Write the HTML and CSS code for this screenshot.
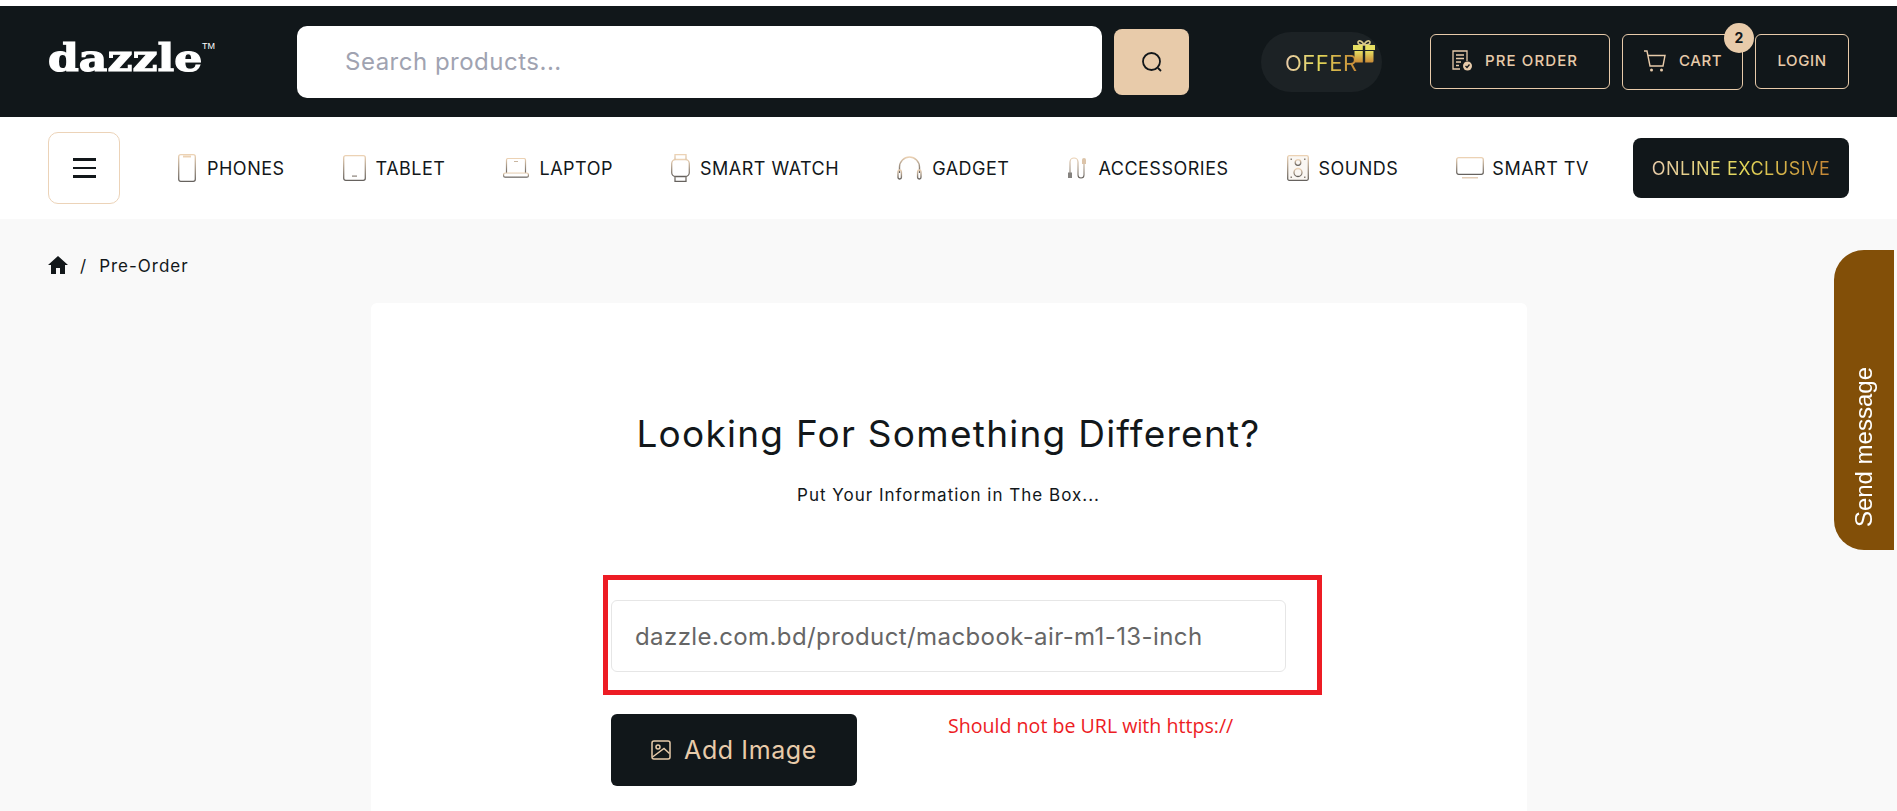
FILE: index.html
```html
<!DOCTYPE html>
<html lang="en">
<head>
<meta charset="utf-8">
<title>Dazzle - Pre-Order</title>
<link rel="stylesheet" href="styles.css">
</head>
<body>
<svg class="defs" width="0" height="0" aria-hidden="true">
  <defs>
    <linearGradient id="fade" x1="0" y1="0" x2="0" y2="1">
      <stop offset="0" stop-color="#ecd2b4"/>
      <stop offset="1" stop-color="#66625e"/>
    </linearGradient>
    <linearGradient id="gold" x1="0" y1="0" x2="0" y2="1">
      <stop offset="0" stop-color="#e6df62"/>
      <stop offset="1" stop-color="#c98a36"/>
    </linearGradient>
  </defs>
</svg>
<header class="topbar">
  <a class="logo"><span class="logo-word">dazzle</span><sup class="tm">TM</sup></a>
  <div class="search-field">Search products...</div>
  <button class="search-btn" aria-label="Search">
    <svg width="24" height="24" viewBox="0 0 24 24" fill="none" stroke="#12171a" stroke-width="1.800"><circle cx="11.500" cy="11.500" r="8.500"/><path d="M18 18l3 3"/></svg>
  </button>
  <a class="offer"><span class="offer-text">OFFER</span>
    <svg class="gift" width="22" height="24" viewBox="0 0 22 24"><path fill="none" stroke="#d9c98a" stroke-width="1.600" d="M11 6C9 1 5 1 5 3.500S8 6 11 6C13 1 17 1 17 3.500S14 6 11 6z"/><path fill="#e6df62" d="M0 6h9.800v5H0zM12.200 6H22v5h-9.800z"/><path fill="url(#gold)" d="M1.500 12h8.300v11.500H3a1.500 1.500 0 0 1-1.500-1.500zM12.200 12h8.300v10a1.500 1.500 0 0 1-1.500 1.500h-6.800z"/></svg>
  </a>
  <a class="tbtn tbtn-pre">
    <svg width="22" height="22" viewBox="0 0 22 22" fill="none" stroke="#e8cbaa" stroke-width="1.300"><path d="M15 11V1H1v18h7"/><path d="M4 5h8M4 8.500h8M4 12h5M4 15.500h3"/><circle cx="15.500" cy="16" r="4.500" fill="#e8cbaa" stroke="none"/><path d="M13.500 16l1.500 1.500 2.500-3" stroke="#12171a"/></svg>
    PRE ORDER</a>
  <a class="tbtn tbtn-cart">
    <svg width="24" height="24" viewBox="0 0 24 24" fill="none" stroke="#e8cbaa" stroke-width="1.400"><path d="M1 2h3l3 15h13l2-10.500H5"/><circle cx="8.500" cy="21" r="1.500" fill="#e8cbaa" stroke="none"/><circle cx="18.500" cy="21" r="1.500" fill="#e8cbaa" stroke="none"/></svg>
    CART<span class="badge">2</span></a>
  <a class="tbtn tbtn-login">LOGIN</a>
</header>

<nav class="navbar">
  <div class="nav-links">
    <button class="burger" aria-label="Menu"><span></span><span></span><span></span></button>
    <a class="nav-item nav-item-phone"><svg width="18" height="28" viewBox="0 0 18 28" fill="none" stroke="url(#fade)" stroke-width="1.300"><rect x=".7" y=".7" width="16.600" height="26.600" rx="2"/><path d="M5 1.500h8v2H5z" fill="#ecd2b4" stroke="none"/></svg>PHONES</a>
    <a class="nav-item"><svg width="23" height="26" viewBox="0 0 23 26" fill="none" stroke="url(#fade)" stroke-width="1.300"><rect x=".7" y=".7" width="21.600" height="24.600" rx="2"/><path d="M9 20.500h5v1.200H9z" fill="#8a8178" stroke="none"/></svg>TABLET</a>
    <a class="nav-item"><svg width="26" height="20" viewBox="0 0 26 20" fill="none" stroke="url(#fade)" stroke-width="1.200"><path d="M3.500 15V2a1.500 1.500 0 0 1 1.500-1.500h16A1.500 1.500 0 0 1 22.500 2v13"/><rect x=".6" y="15" width="24.800" height="4.200" rx="1.500"/><path d="M11 3h4v1h-4z" fill="#c9b6a0" stroke="none"/></svg>LAPTOP</a>
    <a class="nav-item"><svg width="19" height="28" viewBox="0 0 19 28" fill="none" stroke="url(#fade)" stroke-width="1.300"><rect x=".7" y="5.500" width="17.600" height="17" rx="4"/><path d="M4 5.500V.7h11v4.800M4 22.500v4.800h11v-4.800"/></svg>SMART WATCH</a>
    <a class="nav-item"><svg width="25" height="24" viewBox="0 0 25 24" fill="none" stroke="url(#fade)" stroke-width="1.400"><path d="M2.500 17V11a10 10 0 0 1 20 0V17"/><rect x="1" y="14" width="3.400" height="9" rx="1.700"/><rect x="20.600" y="14" width="3.400" height="9" rx="1.700"/></svg>GADGET</a>
    <a class="nav-item"><svg width="21" height="23" viewBox="0 0 21 23" fill="none" stroke="url(#fade)" stroke-width="1.100"><path d="M3 16V5a4 4 0 0 1 8 0v13a3 3 0 0 0 6 0V7"/><path d="M1 15.500h4V21H1z" fill="#85827f" stroke="none"/><path d="M15 3a2 2 0 0 1 4 0v4h-4z" fill="#dcc4a9" stroke="none"/></svg>ACCESSORIES</a>
    <a class="nav-item"><svg width="22" height="26" viewBox="0 0 22 26" fill="none" stroke="url(#fade)" stroke-width="1.300"><rect x=".7" y=".7" width="20.600" height="24.600" rx="1.500" fill="#faf7f3"/><circle cx="11" cy="7.500" r="2.800"/><circle cx="11" cy="17.500" r="4"/><path d="M3.500 3.500h1.500v1.500H3.500zM17 3.500h1.500v1.500H17zM3.500 21.500h1.500V23H3.500zM17 21.500h1.500V23H17z" fill="#8a8178" stroke="none"/></svg>SOUNDS</a>
    <a class="nav-item nav-item-tv"><svg width="28" height="22" viewBox="0 0 28 22" fill="none" stroke="url(#fade)" stroke-width="1.300"><rect x=".7" y=".7" width="26.600" height="16.600" rx="2"/><path d="M6 20h16v1.500H6z" fill="#e3cdb6" stroke="none"/></svg>SMART TV</a>
  </div>
  <a class="exclusive"><span class="exclusive-text">ONLINE EXCLUSIVE</span></a>
</nav>

<main class="page">
  <div class="crumbs">
    <svg width="20" height="18" viewBox="0 0 20 18"><path fill="#12171a" d="M10 0L0 9h3v9h5v-6h4v6h5V9h3z"/></svg>
    <span class="crumb-sep">/</span>
    <span class="crumb-current">Pre-Order</span>
  </div>
  <section class="card">
    <h1 class="title">Looking For Something Different?</h1>
    <p class="subtitle">Put Your Information in The Box...</p>
    <div class="form">
      <div class="highlight">
        <div class="url-field">dazzle.com.bd/product/macbook-air-m1-13-inch</div>
      </div>
      <div class="form-row">
        <button class="add-image">
          <svg width="20" height="20" viewBox="0 0 20 20" fill="none" stroke="#e8cbaa" stroke-width="1.500"><rect x="1" y="1" width="18" height="18" rx="2"/><circle cx="7" cy="7" r="2"/><path d="M1.500 17L13 8.500l5.500 5"/></svg>
          Add Image</button>
        <span class="note">Should not be URL with https://</span>
      </div>
    </div>
  </section>
  <aside class="send-tab"><span class="send-text">Send message</span></aside>
</main>
</body>
</html>
```

FILE: styles.css
```css
* { box-sizing: border-box; }
html, body { margin: 0; height: 100%; }
body {
  display: flex;
  flex-direction: column;
  height: 100vh;
  overflow: hidden;
  padding-top: 6px;
  background: #fff;
  color: #12171a;
  font-family: Inter, "Open Sans", sans-serif;
}
.defs { position: absolute; }
button { font-family: inherit; border: 0; padding: 0; }

.topbar {
  flex: none;
  display: flex;
  align-items: center;
  height: 111px;
  padding: 0 48px;
  background: #11171a;
}
.logo {
  display: block;
  width: 249px;
  flex: none;
  color: #fff;
  line-height: 40px;
}
.logo-word {
  display: inline-block;
  font-family: "DejaVu Serif", serif;
  font-weight: 700;
  font-size: 38px;
  -webkit-text-stroke: 1.200px #fff;
  transform: scaleX(1.16);
  transform-origin: left center;
}
.tm {
  font-family: "Liberation Sans", sans-serif;
  font-size: 9px;
  vertical-align: 22px;
  line-height: 0;
  margin-left: 21px;
}
.search-field {
  flex: none;
  display: flex;
  align-items: center;
  width: 805px;
  height: 72px;
  padding-left: 48px;
  background: #fff;
  border-radius: 10px;
  color: #a0a3b1;
  font-size: 24px;
  letter-spacing: .5px;
}
.search-btn {
  flex: none;
  display: flex;
  align-items: center;
  justify-content: center;
  width: 75px;
  height: 66px;
  margin-left: 12px;
  border-radius: 8px;
  background: #e8cbaa;
}
.offer {
  position: relative;
  flex: none;
  display: flex;
  align-items: center;
  width: 121px;
  height: 60px;
  margin-left: 72px;
  padding-left: 24px;
  border-radius: 30px;
  background: #1c2225;
}
.offer-text {
  padding-top: 2px;
  font-size: 22px;
  letter-spacing: .5px;
  background: linear-gradient(90deg, #e8cbaa, #e3d95a 45%, #c48535);
  -webkit-background-clip: text;
  background-clip: text;
  color: transparent;
}
.gift { position: absolute; left: 92px; top: 7px; }
.tbtn {
  position: relative;
  flex: none;
  display: flex;
  align-items: center;
  justify-content: center;
  height: 55px;
  margin-left: 12px;
  padding-bottom: 2px;
  border: 1px solid #e8cbaa;
  border-radius: 6px;
  color: #e8cbaa;
  font-size: 15px;
  letter-spacing: .6px;
  font-weight: 500;
}
.tbtn-pre {
  width: 180px;
  margin-left: 48px;
  gap: 11px;
  justify-content: flex-start;
  padding-left: 21px;
  letter-spacing: 1.100px;
}
.tbtn-cart { width: 121px; gap: 12px; height: 56px; }
.tbtn-login { width: 94px; }
.badge {
  position: absolute;
  right: -12px;
  top: -12px;
  width: 30px;
  height: 30px;
  display: flex;
  align-items: center;
  justify-content: center;
  border-radius: 50%;
  background: #e8cbaa;
  color: #12171a;
  font-size: 14px;
  letter-spacing: 0;
  font-weight: 700;
}

.navbar {
  flex: none;
  display: flex;
  align-items: center;
  justify-content: space-between;
  height: 102px;
  padding: 0 48px;
  background: #fff;
}
.nav-links {
  display: flex;
  align-items: center;
  gap: 58px;
}
.burger {
  flex: none;
  display: flex;
  flex-direction: column;
  align-items: center;
  justify-content: center;
  gap: 6px;
  width: 72px;
  height: 72px;
  border: 1px solid #ecd3b8;
  border-radius: 10px;
  background: #fff;
}
.burger span { display: block; width: 23px; height: 2.500px; background: #12171a; }
.nav-item {
  display: flex;
  align-items: center;
  gap: 10px;
  font-size: 18px;
  letter-spacing: .5px;
  color: #12171a;
  white-space: nowrap;
}
.nav-item-phone { gap: 11px; }
.nav-item-tv { gap: 8px; }
.exclusive {
  flex: none;
  display: flex;
  align-items: center;
  justify-content: center;
  width: 216px;
  height: 60px;
  border-radius: 8px;
  background: #11171a;
}
.exclusive-text {
  font-size: 18px;
  letter-spacing: .5px;
  background: linear-gradient(90deg, #e8cbaa, #e3d95a 50%, #c48535);
  -webkit-background-clip: text;
  background-clip: text;
  color: transparent;
}

.page {
  position: relative;
  flex: 1;
  min-height: 0;
  display: flex;
  flex-direction: column;
  background: #f9f9f9;
  padding-top: 36px;
}
.crumbs {
  flex: none;
  display: flex;
  align-items: center;
  height: 20px;
  padding-left: 48px;
  font-size: 17px;
}
.crumb-sep { margin: 0 13px 0 12px; padding-top: 2px; }
.crumb-current { letter-spacing: 1px; padding-top: 2px; }
.card {
  flex: 1;
  min-height: 0;
  width: 1156px;
  margin: 28px auto 0;
  padding-top: 107px;
  background: #fff;
  border-radius: 6px 6px 0 0;
  text-align: center;
}
.title {
  margin: 0;
  font-size: 37px;
  line-height: 48px;
  letter-spacing: 1.250px;
  font-weight: 400;
}
.subtitle {
  margin: 25px 0 0;
  font-size: 17px;
  line-height: 24px;
  letter-spacing: 1px;
}
.form { width: 675px; margin: 68px auto 0; text-align: left; }
.highlight {
  width: 719px;
  height: 120px;
  margin-left: -8px;
  padding: 20px 0 0 3px;
  border: 5px solid #ed1c24;
}
.url-field {
  display: flex;
  align-items: center;
  width: 675px;
  height: 72px;
  padding-left: 23px;
  background: #fff;
  border: 1px solid #e6e6e6;
  border-radius: 6px;
  color: #666;
  font-size: 24px;
  letter-spacing: .4px;
  white-space: nowrap;
}
.form-row { display: flex; align-items: flex-start; margin-top: 19px; }
.add-image {
  flex: none;
  display: flex;
  align-items: center;
  justify-content: center;
  gap: 13px;
  width: 246px;
  height: 72px;
  border-radius: 6px;
  background: #11171a;
  color: #e8cbaa;
  font-size: 25px;
  letter-spacing: .6px;
}
.note {
  margin: 0 0 0 91px;
  color: #ed1c24;
  font-family: "Open Sans", sans-serif;
  font-size: 19.600px;
  line-height: 24px;
}
.send-tab {
  position: absolute;
  right: 3px;
  top: 31px;
  display: flex;
  align-items: flex-end;
  justify-content: center;
  width: 60px;
  height: 300px;
  padding-bottom: 23px;
  border-radius: 30px 0 0 30px;
  background: #824f08;
}
.send-text {
  writing-mode: vertical-rl;
  transform: rotate(180deg);
  color: #fff;
  font-family: "Liberation Sans", sans-serif;
  font-size: 24px;
  line-height: 30px;
}
```
